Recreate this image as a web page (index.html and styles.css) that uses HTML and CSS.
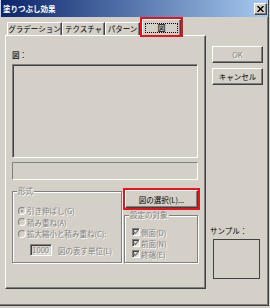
FILE: index.html
```html
<!DOCTYPE html>
<html>
  <head>
    <meta charset="UTF-8" />
    <title>塗りつぶし効果</title>
    <link rel="stylesheet" href="styles.css">
  </head>
  <body>
    <div class="dialog">
      <div class="titlebar">
        <span class="titlebar__text">塗りつぶし効果</span>
        <span class="titlebar__close">
          <svg width="7" height="6" viewBox="0 0 7 6">
            <path d="M0.5 0 L6.5 6 M6.5 0 L0.5 6" stroke="#000" stroke-width="1.4" />
          </svg>
        </span>
      </div>
      <div class="dialog__body">
        <div class="main">
          <div class="tabs">
            <div class="tab tab--grad">グラデーション</div>
            <div class="tab tab--tex">テクスチャ</div>
            <div class="tab tab--pat">パターン</div>
            <div class="tab tab--active"><span class="tab__focus">図</span></div>
          </div>
          <div class="panel">
            <div class="panel__label"><b>図</b>：</div>
            <div class="picture"></div>
            <div class="status"></div>
            <div class="lower">
              <div class="group group--format">
                <span class="group__legend">形式</span>
                <div class="opt"><span class="radio radio--checked"></span>引き伸ばし(G)</div>
                <div class="opt"><span class="radio"></span>積み重ね(A)</div>
                <div class="opt"><span class="radio"></span>拡大縮小と積み重ね(C):</div>
                <div class="unit">
                  <span class="unit__field">1000</span>
                  <span>図の表す単位(L)</span>
                </div>
              </div>
              <div class="side">
                <button class="btn btn--select">図の選択(L)...</button>
                <div class="group group--target">
                  <span class="group__legend">設定の対象</span>
                  <div class="opt"><span class="check"><svg width="6" height="6" viewBox="0 0 6 6"><path d="M0.5 2.5 L2.3 4.5 L5.5 0.8" fill="none" stroke="#808080" stroke-width="1.4" /></svg></span>側面(D)</div>
                  <div class="opt"><span class="check"><svg width="6" height="6" viewBox="0 0 6 6"><path d="M0.5 2.5 L2.3 4.5 L5.5 0.8" fill="none" stroke="#808080" stroke-width="1.4" /></svg></span>前面(N)</div>
                  <div class="opt"><span class="check"><svg width="6" height="6" viewBox="0 0 6 6"><path d="M0.5 2.5 L2.3 4.5 L5.5 0.8" fill="none" stroke="#808080" stroke-width="1.4" /></svg></span>終端(E)</div>
                </div>
              </div>
            </div>
          </div>
        </div>
        <div class="aside">
          <button class="btn btn--ok" disabled>OK</button>
          <button class="btn btn--cancel">キャンセル</button>
          <div class="sample-label">サンプル：</div>
          <div class="sample"></div>
        </div>
      </div>
    </div>
  </body>
</html>
```

FILE: styles.css
```css
html,
body {
  margin: 0;
  padding: 0;
}
body {
  background: #d4d0c8;
  font-family: "Noto Sans CJK JP", "Liberation Sans", sans-serif;
  font-size: 7.5px;
  color: #000;
}
.dialog {
  width: 269px;
  height: 306px;
  box-sizing: border-box;
  padding-left: 1px;
  background: #d4d0c8;
  border-right: 1px solid #404040;
  border-bottom: 1px solid #404040;
  box-shadow: inset -1px -1px #808080;
}
.titlebar {
  height: 17px;
  display: flex;
  align-items: center;
  justify-content: space-between;
  padding: 0 1px 0 2px;
  background: linear-gradient(to right, #0a246a, #a6caf0);
  color: #fff;
  font-weight: bold;
}
.titlebar__close {
  width: 13px;
  height: 12px;
  box-sizing: border-box;
  display: flex;
  align-items: center;
  justify-content: center;
  background: #d4d0c8;
  border: 1px solid;
  border-color: #fff #404040 #404040 #fff;
  box-shadow: inset -1px -1px #808080;
}
.dialog__body {
  display: flex;
  padding-left: 4px;
}
.main {
  width: 201px;
}
.tabs {
  height: 18px;
  display: flex;
  align-items: flex-end;
  padding-left: 2px;
}
.tab {
  height: 13px;
  box-sizing: border-box;
  display: flex;
  align-items: center;
  justify-content: center;
  white-space: nowrap;
  line-height: 1;
  border-top: 1px solid #fff;
  border-left: 1px solid #fff;
  border-right: 1px solid #404040;
  box-shadow: inset -1px 0 #808080;
}
.tab--grad {
  width: 55px;
}
.tab--tex {
  width: 43px;
}
.tab--pat {
  width: 35px;
}
.tab--active {
  width: 39px;
  height: 16px;
  margin-left: 2px;
  align-self: flex-start;
  margin-top: 2px;
  position: relative;
  z-index: 1;
  background: #d4d0c8;
  outline: 2px solid #e8141c;
}
.tab__focus {
  width: 33px;
  height: 10px;
  box-sizing: border-box;
  border: 1px dotted #000;
  display: flex;
  align-items: center;
  justify-content: center;
  line-height: 8px;
  font-size: 8px;
  font-weight: bold;
  color: #333;
}
.panel {
  height: 254px;
  box-sizing: border-box;
  border: 1px solid;
  border-color: #fff #404040 #404040 #fff;
  box-shadow: inset -1px -1px #808080;
  padding: 14px 0 0 6px;
}
.panel__label {
  height: 10px;
  line-height: 10px;
}
.panel__label b {
  color: #333;
}
.picture {
  margin-top: 4px;
  width: 186px;
  height: 94px;
  box-sizing: border-box;
  border: 1px solid;
  border-color: #808080 #fff #fff #808080;
  box-shadow: inset 1px 1px #404040, inset -1px -1px #d4d0c8;
}
.status {
  margin-top: 4px;
  width: 186px;
  height: 18px;
  box-sizing: border-box;
  border: 1px solid;
  border-color: #808080 #fff #fff #808080;
}
.lower {
  display: flex;
  gap: 2px;
  margin-top: 6px;
}
.group {
  position: relative;
  box-sizing: border-box;
  border: 1px solid #808080;
  box-shadow: inset 1px 1px #fff, 1px 1px #fff;
  color: #808080;
  text-shadow: 1px 1px 0 #fff;
}
.group__legend {
  position: absolute;
  top: -6px;
  left: 4px;
  padding: 0 1px;
  line-height: 10px;
  background: #d4d0c8;
  white-space: nowrap;
}
.group--format {
  width: 110px;
  height: 72px;
  margin-top: 5px;
  padding: 13px 0 0 5px;
}
.opt {
  display: flex;
  align-items: center;
  gap: 1px;
  height: 11.5px;
  white-space: nowrap;
}
.radio {
  width: 8px;
  height: 8px;
  box-sizing: border-box;
  flex-shrink: 0;
  border-radius: 50%;
  border: 1px solid;
  border-color: #808080 #fff #fff #808080;
  background: #d4d0c8;
  display: flex;
  align-items: center;
  justify-content: center;
}
.radio--checked::after {
  content: "";
  width: 2px;
  height: 2px;
  border-radius: 50%;
  background: #808080;
}
.unit {
  display: flex;
  align-items: center;
  gap: 6px;
  margin-top: 4.5px;
  padding-left: 12px;
  white-space: nowrap;
}
.unit__field {
  width: 22px;
  height: 12px;
  box-sizing: border-box;
  border: 1px solid;
  border-color: #808080 #fff #fff #808080;
  box-shadow: inset 1px 1px #404040;
  text-align: right;
  padding-right: 2px;
  line-height: 10px;
}
.side {
  width: 75px;
}
.btn {
  display: block;
  box-sizing: border-box;
  margin: 0;
  padding: 0;
  font: inherit;
  color: #000;
  background: #d4d0c8;
  border: 1px solid;
  border-color: #fff #404040 #404040 #fff;
  box-shadow: inset -1px -1px #808080;
  white-space: nowrap;
}
.btn--select {
  width: 73px;
  height: 18px;
  margin: 4px 0 0 1px;
  outline: 2px solid #e8141c;
}
.group--target {
  width: 74px;
  height: 48px;
  margin-top: 7px;
  padding: 10.5px 0 0 7px;
}
.group--target .opt {
  height: 11px;
}
.check {
  width: 8px;
  height: 8px;
  box-sizing: border-box;
  flex-shrink: 0;
  border: 1px solid;
  border-color: #808080 #fff #fff #808080;
  box-shadow: inset 1px 1px #404040;
  background: #e4e2dc;
  display: flex;
  align-items: center;
  justify-content: center;
}
.aside {
  width: 51px;
  margin-left: 6px;
}
.btn--ok {
  width: 51px;
  height: 17px;
  margin-top: 29px;
  color: #808080;
  text-shadow: 1px 1px 0 #fff;
}
.btn--cancel {
  width: 51px;
  height: 17px;
  margin-top: 5px;
}
.sample-label {
  margin: 141px 0 0 -2px;
  height: 10px;
  line-height: 10px;
  white-space: nowrap;
}
.sample {
  width: 47px;
  height: 40px;
  margin: 3px 0 0 1px;
  box-sizing: border-box;
  border: 1px solid #404040;
}
```
